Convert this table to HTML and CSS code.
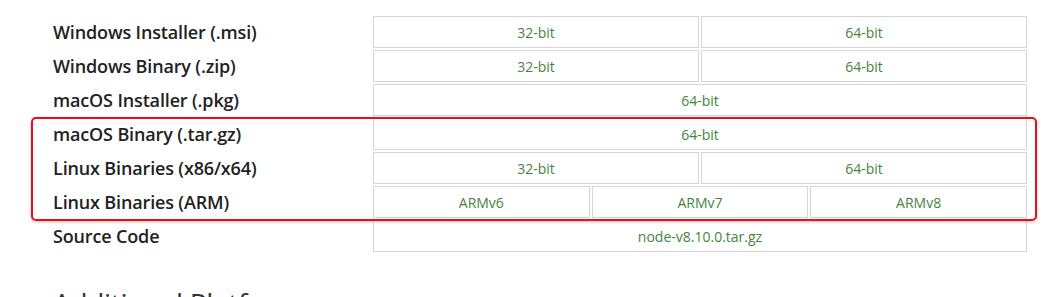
FILE: index.html
```html
<!DOCTYPE html>
<html>
<head>
<meta charset="utf-8">
<link rel="stylesheet" href="styles.css">
</head>
<body>
<div class="page">
  <div class="downloads">
    <div class="label">Windows Installer (.msi)</div>
    <a class="cell half">32-bit</a>
    <a class="cell half">64-bit</a>

    <div class="label">Windows Binary (.zip)</div>
    <a class="cell half">32-bit</a>
    <a class="cell half">64-bit</a>

    <div class="label">macOS Installer (.pkg)</div>
    <a class="cell full">64-bit</a>

    <div class="label">macOS Binary (.tar.gz)</div>
    <a class="cell full">64-bit</a>

    <div class="label">Linux Binaries (x86/x64)</div>
    <a class="cell half">32-bit</a>
    <a class="cell half">64-bit</a>

    <div class="label">Linux Binaries (ARM)</div>
    <a class="cell third">ARMv6</a>
    <a class="cell third">ARMv7</a>
    <a class="cell third">ARMv8</a>

    <div class="label">Source Code</div>
    <a class="cell full">node-v8.10.0.tar.gz</a>

    <div class="highlight"></div>
  </div>
  <h2 class="heading">Additional Platforms</h2>
</div>
</body>
</html>
```

FILE: styles.css
```css
html, body {
  margin: 0;
  padding: 0;
  background: #fff;
}
body {
  font-family: "Open Sans", "Noto Sans", sans-serif;
  color: #333;
}
.page {
  padding: 16px 27px 0 53px;
}
.downloads {
  position: relative;
  display: grid;
  grid-template-columns: 318px repeat(6, 1fr);
  grid-auto-rows: 32px;
  gap: 2px;
}
.label {
  display: flex;
  align-items: center;
  font-size: 18px;
  font-weight: 600;
  color: #222;
  letter-spacing: -0.15px;
}
.cell {
  display: flex;
  align-items: center;
  justify-content: center;
  border: 1px solid #d6d6d6;
  font-size: 14px;
  color: #43853d;
  text-decoration: none;
}
.half { grid-column: span 3; }
.full { grid-column: span 6; }
.third { grid-column: span 2; }
.highlight {
  position: absolute;
  left: -22px;
  top: 101px;
  right: -10px;
  height: 100px;
  border: 2px solid #e1121b;
  border-radius: 5px;
  box-shadow: 0 1px 3px rgba(200, 0, 0, 0.3);
  pointer-events: none;
}
.heading {
  margin: 35px 0 0;
  font-size: 28px;
  font-weight: 400;
  color: #333;
  line-height: 1.2;
  letter-spacing: -0.3px;
}
```
